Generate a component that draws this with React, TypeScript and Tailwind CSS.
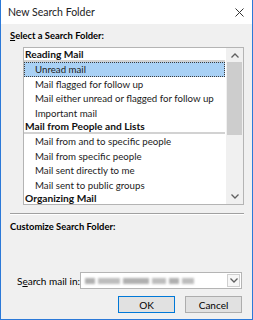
import React from "react";

const items: { t: string; h?: boolean; sel?: boolean }[] = [
  { t: "Reading Mail", h: true },
  { t: "Unread mail", sel: true },
  { t: "Mail flagged for follow up" },
  { t: "Mail either unread or flagged for follow up" },
  { t: "Important mail" },
  { t: "Mail from People and Lists", h: true },
  { t: "Mail from and to specific people" },
  { t: "Mail from specific people" },
  { t: "Mail sent directly to me" },
  { t: "Mail sent to public groups" },
  { t: "Organizing Mail", h: true },
];

function Chevron({ up }: { up?: boolean }) {
  return (
    <svg width="8" height="5" viewBox="0 0 8 5" className="block">
      <path
        d={up ? "M0.5 4.5 L4 1 L7.5 4.5" : "M0.5 0.5 L4 4 L7.5 0.5"}
        fill="none"
        stroke="#606060"
        strokeWidth="1.3"
      />
    </svg>
  );
}

export default function App() {
  return (
    <div className="w-[253px] h-[320px] flex flex-col border-x border-b border-[#2b79d8] bg-[#f0f0f0] font-['Lato',sans-serif] text-[10px] leading-[12px] text-black overflow-hidden whitespace-nowrap">
      <div className="h-[24px] shrink-0 bg-white flex items-center justify-between pl-[7px] pr-[8px]">
        <span className="text-[10.5px] text-[#222]">New Search Folder</span>
        <svg width="9" height="9" viewBox="0 0 9 9" className="mt-[1px]">
          <path d="M0.5 0.5 L8.5 8.5 M8.5 0.5 L0.5 8.5" stroke="#333" strokeWidth="1" />
        </svg>
      </div>
      <div className="flex flex-col pl-[9px] pr-[8px] pt-[6px]">
        <div className="font-bold text-[9.4px]">
          <span className="underline">S</span>elect a Search Folder:
        </div>
        <div className="ml-[13px] mt-[5px] h-[158px] border border-[#b4b4b4] bg-white flex">
          <div className="flex-1 overflow-hidden flex flex-col">
            {items.map((it) =>
              it.h ? (
                <div key={it.t} className="h-[14px] shrink-0 mr-[1px] pl-[1px] font-bold text-[10.2px] border-b-2 border-[#d2d2d2] text-[#111]">
                  {it.t}
                </div>
              ) : (
                <div
                  key={it.t}
                  className={
                    "h-[14.5px] shrink-0 mr-[1px] flex items-center text-[9.7px] text-[#1b1b1b] " +
                    (it.sel ? "bg-[#a9d1f5] border border-dotted border-[#3c3c3c] pl-[10px]" : "pl-[11px]")
                  }
                >
                  {it.t}
                </div>
              )
            )}
          </div>
          <div className="w-[17px] shrink-0 bg-[#f0f0f0] flex flex-col">
            <div className="h-[14px] flex items-center justify-center">
              <Chevron up />
            </div>
            <div className="h-[73px] mx-[1px] bg-[#cdcdcd]" />
            <div className="flex-1" />
            <div className="h-[16px] flex items-center justify-center">
              <Chevron />
            </div>
          </div>
        </div>
        <div className="mt-[8px] border-t border-[#a0a0a0] border-b border-b-white" />
        <div className="font-bold text-[9.4px] mt-[6px]">Customize Search Folder:</div>
        <div className="mt-[39px] flex items-center pr-[2px]">
          <span className="ml-[7px]">
            S<span className="underline">e</span>arch mail in:
          </span>
          <div className="ml-auto w-[162px] h-[17px] bg-white border border-[#b4b4b4] flex items-center">
            <div className="ml-[4px] flex items-center gap-[3px] blur-[1px]">
              <div className="w-[10px] h-[6px] bg-[#b0b0b0]" />
              <div className="w-[22px] h-[6px] bg-[#bdbdbd]" />
              <div className="w-[26px] h-[6px] bg-[#b0b0b0]" />
              <div className="w-[14px] h-[6px] bg-[#bdbdbd]" />
              <div className="w-[10px] h-[6px] bg-[#b0b0b0]" />
              <div className="w-[12px] h-[6px] bg-[#bdbdbd]" />
            </div>
            <div className="ml-auto mr-[1px] w-[13px] h-[13px] border border-[#cfcfcf] bg-[#f7f7f7] flex items-center justify-center">
              <Chevron />
            </div>
          </div>
        </div>
        <div className="mt-[7px] flex justify-end gap-[10px] pr-[2px]">
          <div className="w-[57px] h-[17px] bg-[#e1e1e1] border border-[#0078d7] flex items-center justify-center">OK</div>
          <div className="w-[57px] h-[17px] bg-[#e1e1e1] border border-[#adadad] flex items-center justify-center">Cancel</div>
        </div>
      </div>
    </div>
  );
}
